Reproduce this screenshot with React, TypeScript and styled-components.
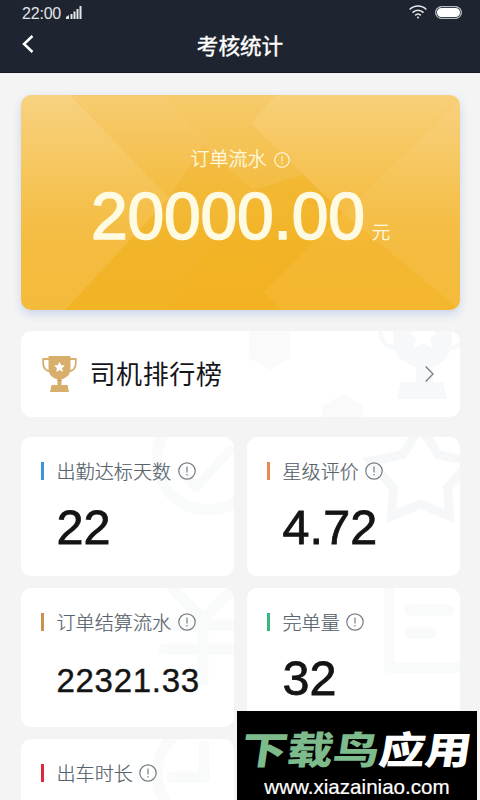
import React from 'react'
import styled, { createGlobalStyle } from 'styled-components'

const stats = [
  { id: 'days', label: '出勤达标天数', value: '22', color: '#3a94e4' },
  { id: 'star', label: '星级评价', value: '4.72', color: '#e88a50' },
  { id: 'money', label: '订单结算流水', value: '22321.33', color: '#c8924f', small: true },
  { id: 'order', label: '完单量', value: '32', color: '#35b87e' },
  { id: 'clock', label: '出车时长', value: '', color: '#d92a3f' },
]

const Info = ({ size = 18 }: { size?: number }) => (
  <svg width={size} height={size} viewBox="0 0 18 18" fill="none" stroke="currentColor">
    <circle cx="9" cy="9" r="8.2" strokeWidth="1.2" />
    <path d="M9 4.6v6M9 12v1.5" strokeWidth="1.2" />
  </svg>
)

const Trophy = () => (
  <svg width="35" height="36" viewBox="0 0 35 36">
    <path d="M7 3H1.2v4.5c0 5 3 7.700 8.500 8M28 3h5.800v4.500c0 5-3 7.700-8.500 8" fill="none" stroke="#d8ae6c" strokeWidth="1.800" />
    <path d="M6.500 0h22v12.500c0 6-3.500 9.500-9 10.700V29h6l1.500 7H8l1.500-7h6v-5.800C10 22 6.500 18.500 6.500 12.500z" fill="#d8ae6c" />
    <path d="M15.500 24.300h4" stroke="#c39650" strokeWidth="1" />
    <path d="M17.500 5.800l1.600 3.300 3.700.5-2.700 2.600.7 3.700-3.300-1.800-3.300 1.800.7-3.700-2.700-2.600 3.700-.5z" fill="#fff" />
  </svg>
)

const art: Record<string, React.ReactNode> = {
  days: (
    <>
      <circle cx="187" cy="22" r="51" strokeWidth="11" />
      <path d="M160 33l15 18 34-38" strokeWidth="9" />
    </>
  ),
  star: (
    <path
      d="M173.500 -10l18 28 32 6-23 27 2 28-29-12-29 12 2-28-23-27 32-6z"
      stroke="#f6f7f9"
      strokeWidth="9"
      strokeLinejoin="miter"
    />
  ),
  money: <path d="M151 0l31 31 31-31M143 37h75M143 61h75M182 31v61" strokeWidth="11" />,
  order: (
    <>
      <path d="M142 -8v88h62c10 0 16-6 16-16V-8" strokeWidth="10" strokeLinecap="butt" />
      <path d="M163 22h39M163 45h22" strokeWidth="11" />
    </>
  ),
  clock: (
    <>
      <circle cx="187" cy="35" r="51" strokeWidth="11" />
      <path d="M183 7v31h-32" strokeWidth="11" />
    </>
  ),
}

const App = () => {
  return (
    <StyledPage>
      <GlobalStyle />
      <StyledHeader>
        <div className="status">
          <div className="left">
            <span>22:00</span>
            <svg width="16" height="13" viewBox="0 0 16 13" fill="#e4e6e9">
              <path d="M0 13v-2l3-2v4zM4.500 8h2v5h-2zM7.500 5.500h2V13h-2zM10.500 3h2v10h-2zM13.500 0h2v13h-2z" />
            </svg>
          </div>
          <div className="right">
            <svg width="18" height="14" viewBox="0 0 18 14" fill="none" stroke="#e8eaed" strokeWidth="1.6">
              <path d="M.7 4.500c4.700-4.700 11.900-4.700 16.600 0M3.500 7.600c3.100-3.100 7.900-3.100 11 0M6.200 10.300c1.600-1.500 4-1.500 5.600 0" />
              <circle cx="9" cy="12.600" r="1" fill="#e8eaed" stroke="none" />
            </svg>
            <StyledBattery />
          </div>
        </div>
        <div className="nav">
          <svg width="12" height="18" viewBox="0 0 12 18" fill="none" stroke="#fff" strokeWidth="2.500">
            <path d="M10.500 1L2 9l8.500 8" />
          </svg>
          <h1>考核统计</h1>
        </div>
      </StyledHeader>

      <StyledContent>
        <StyledHero>
          <StyledArt viewBox="0 0 439 215">
            <g fill="#fff">
              <path d="M0 0h49l99 103L44 215H0z" opacity=".07" />
              <path d="M255 0h184L322 118 230 28z" opacity=".025" />
              <path d="M439 5v210L322 118z" opacity=".07" />
            </g>
            <g fill="#eda600">
              <path d="M148 103L44 215h98l90-120-50-45z" opacity=".16" />
              <path d="M232 95L142 215h118l-17-18 79-79-40-38z" opacity=".24" />
              <path d="M49 0h91l92 95-84 8z" opacity=".05" />
              <path d="M140 0h115l-25 28 92 90-90-23z" opacity=".09" />
            </g>
          </StyledArt>
          <div className="label">
            <span>订单流水</span>
            <Info size={16} />
          </div>
          <div className="amount">
            <strong>20000.00</strong>
            <span>元</span>
          </div>
        </StyledHero>

        <StyledRank>
          <StyledArt viewBox="0 0 439 86">
            <g fill="#fafafb">
              <path d="M228 0h41v27l-20 12-21-12z" />
              <path d="M301 86V75l21-12 20 12v11z" />
            </g>
            <path
              d="M372 0h59v8c0 15-8 24-19 28v15h10l4 17h-50l4-17h15V36c-14-4-23-13-23-28z"
              fill="#f6f8fa"
            />
            <path d="M373 17c-9-2-14-8-14-19M430 17c6-1 11-5 13-11" fill="none" stroke="#f6f8fa" strokeWidth="4" />
            <path d="M393 0h20l2 2-6 6 2 9-9-5-9 5 2-9-6-6z" fill="#fff" />
          </StyledArt>
          <Trophy />
          <h2>司机排行榜</h2>
          <svg className="arrow" width="9" height="16" viewBox="0 0 9 16" fill="none" stroke="#7b7d82" strokeWidth="1.300">
            <path d="M.7.500L8 8 .7 15.500" />
          </svg>
        </StyledRank>

        <StyledGrid>
          {stats.map(stat => (
            <StyledStat key={stat.id}>
              <StyledArt viewBox="0 0 213 138.500" fill="none" stroke="#f9fafa" strokeLinecap="round" strokeLinejoin="round">
                {art[stat.id]}
              </StyledArt>
              <div className="heading">
                <StyledMark $color={stat.color} />
                <span>{stat.label}</span>
                <Info />
              </div>
              <StyledValue $small={stat.small}>{stat.value}</StyledValue>
            </StyledStat>
          ))}
        </StyledGrid>
      </StyledContent>

      <StyledBanner>
        <div className="brand">
          <span>下载鸟</span>应用
        </div>
        <div className="site">www.xiazainiao.com</div>
      </StyledBanner>
    </StyledPage>
  )
}

export default App


const GlobalStyle = createGlobalStyle`
  * {
    box-sizing: border-box;
  }
  body {
    margin: 0;
    overflow: hidden;
    background-color: #f4f4f4;
  }
  h1, h2 {
    margin: 0;
  }
  svg {
    display: block;
    flex-shrink: 0;
  }
`

const StyledPage = styled.div`
  position: relative;
  width: 480px;
  height: 800px;
  overflow: hidden;
  background-color: #f4f4f4;
  font-family: 'Liberation Sans', 'Noto Sans CJK SC', sans-serif;
`

const StyledHeader = styled.header`
  height: 73px;
  background-color: #1f2530;
  border-bottom: 1px solid #151a22;
  color: white;

  .status {
    display: flex;
    justify-content: space-between;
    height: 25px;
    padding: 5px 18px 0 22px;
  }
  .left {
    display: flex;
    gap: 5px;
    font-size: 16px;
    line-height: 18px;
    color: #e1e4e8;
    span {
      letter-spacing: -0.2px;
    }
    svg {
      margin-top: 1px;
    }
  }
  .right {
    display: flex;
    gap: 8px;
  }
  .nav {
    display: flex;
    align-items: center;
    height: 38px;
    padding: 0 22px;
    h1 {
      flex: 1;
      margin-right: 12px;
      text-align: center;
      font-size: 21.6px;
      font-weight: 400;
      -webkit-text-stroke: 0.4px white;
    }
  }
`

const StyledBattery = styled.div`
  width: 27px;
  height: 13px;
  margin-top: 1px;
  border: 1px solid #b9bdc2;
  border-radius: 7px;
  background-color: white;
  box-shadow: inset 0 0 0 1px #3c424c;
`

const StyledContent = styled.main`
  padding: 22px 20.5px 0;
`

const StyledArt = styled.svg`
  position: absolute;
  inset: 0;
  width: 100%;
  height: 100%;
`

const StyledHero = styled.section`
  position: relative;
  height: 215px;
  overflow: hidden;
  border-radius: 10px;
  background: linear-gradient(180deg, #f8cf77 0%, #f5bd41 50%, #f4b732 70%, #f4b62d 100%);
  box-shadow: 0 4px 10px #c9d5ec;
  color: #fffbe3;

  .label {
    position: relative;
    display: flex;
    justify-content: center;
    align-items: center;
    gap: 7px;
    padding-top: 51px;
    font-size: 19px;
    line-height: 28px;
    font-weight: 300;
    -webkit-text-stroke: 0.3px #fffbe3;
  }
  .amount {
    position: relative;
    display: flex;
    align-items: baseline;
    gap: 7px;
    padding: 4px 0 0 70.5px;
    line-height: 76px;
    strong {
      font-size: 66px;
      font-weight: 400;
      letter-spacing: -0.2px;
      -webkit-text-stroke: 1.6px #fffbe3;
    }
    span {
      font-size: 18.5px;
      font-weight: 300;
      -webkit-text-stroke: 0.3px #fffbe3;
    }
  }
`

const StyledRank = styled.section`
  position: relative;
  display: flex;
  align-items: center;
  height: 86px;
  margin-top: 20.5px;
  padding: 0 26px 0 21px;
  overflow: hidden;
  border-radius: 10px;
  background-color: white;

  h2 {
    position: relative;
    margin: -2px 0 0 13px;
    font-size: 26px;
    font-weight: 400;
    letter-spacing: 0.6px;
    color: #15161a;
  }
  .arrow {
    position: relative;
    margin-left: auto;
  }
`

const StyledGrid = styled.section`
  display: grid;
  grid-template-columns: 1fr 1fr;
  grid-auto-rows: 138.5px;
  gap: 12.5px 13px;
  margin-top: 20.5px;
`

const StyledStat = styled.div`
  position: relative;
  overflow: hidden;
  border-radius: 10px;
  background-color: white;

  .heading {
    position: relative;
    display: flex;
    align-items: center;
    height: 28px;
    margin: 20px 0 0 20px;
    font-size: 19.1px;
    font-weight: 300;
    color: #56626c;
    -webkit-text-stroke: 0.2px #56626c;
    svg {
      margin-left: 6.5px;
      color: #777d83;
    }
  }
`

const StyledMark = styled.i<{ $color: string }>`
  width: 3px;
  height: 18px;
  margin-right: 13px;
  background-color: ${({ $color }) => $color};
`

const StyledValue = styled.div<{ $small?: boolean }>`
  position: relative;
  height: 84px;
  padding-left: 36px;
  font-size: ${({ $small }) => ($small ? '33px' : '48.5px')};
  letter-spacing: ${({ $small }) => ($small ? '0.7px' : '0.1px')};
  line-height: ${({ $small }) => ($small ? '89px' : '84px')};
  color: #141414;
  -webkit-text-stroke: ${({ $small }) => ($small ? '0.4px' : '0.8px')} #141414;
`

const StyledBanner = styled.div`
  position: absolute;
  left: 237px;
  top: 711px;
  width: 240px;
  height: 89px;
  overflow: hidden;
  background-color: black;
  color: white;
  text-align: center;

  .brand {
    height: 60px;
    padding-top: 10px;
    font-size: 38px;
    line-height: 60px;
    font-weight: 900;
    white-space: nowrap;
    transform: translateX(1px) scaleX(1.21) skewX(-7deg);
    span {
      color: #7dba8c;
    }
  }
  .site {
    margin-top: 3px;
    font-size: 20.6px;
    line-height: 26px;
    -webkit-text-stroke: 0.2px white;
  }
`
